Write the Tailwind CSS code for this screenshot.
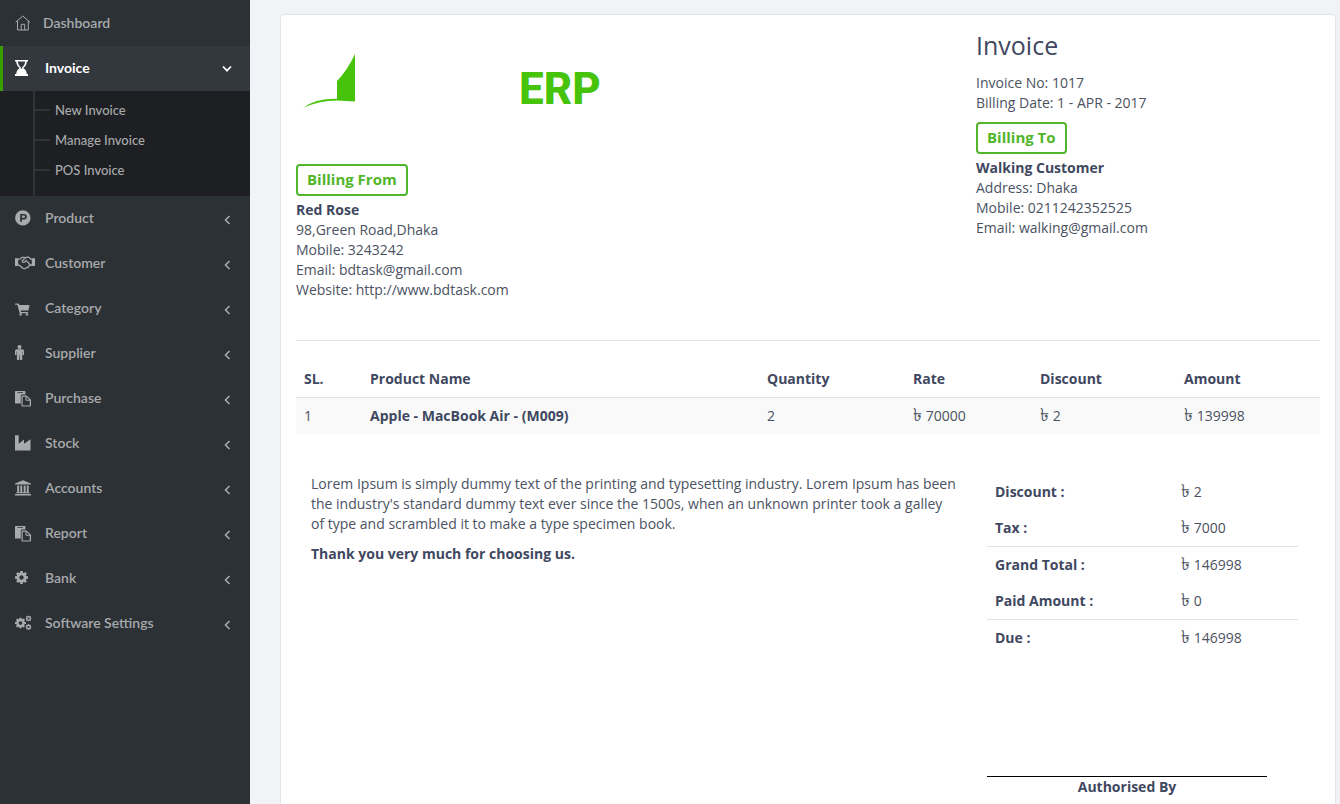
<!DOCTYPE html>
<html lang="en">
<head>
<meta charset="utf-8">
<title>Invoice</title>
<script src="https://cdn.jsdelivr.net/npm/@tailwindcss/browser@4"></script>
</head>
<body class="flex h-screen overflow-hidden bg-[#f1f3f6] font-['Open_Sans',sans-serif] text-sm text-[#4b5262]">

<svg class="hidden">
  <symbol id="chev" viewBox="0 0 8 10"><path d="M6.500 1 2.500 5l4 4" fill="none" stroke="currentColor" stroke-width="1.600"/></symbol>
  <symbol id="paste" viewBox="0 0 16 16"><path fill="currentColor" fill-rule="evenodd" d="M.6 0h9.200q.6 0 .6.6V3.500H7q-1.200 0-1.200 1.200V12.500H.6Q0 12.500 0 11.900V.6Q0 0 .6 0zM2.500 1.200v.8h5.500v-.8zM7.300 4.500h4.200l4.500 4.300v6q0 .8-.8.8H7.300q-.8 0-.8-.8V5.300q0-.8.8-.8zM7.700 5.700v8.700h7V9.800h-3.400q-.8 0-.8-.8V5.700zM11.600 6v2.700h2.700z"/></symbol>
  <symbol id="cog" viewBox="128 128 1536 1536"><path fill="currentColor" d="M1152 896q0-106-75-181t-181-75-181 75-75 181 75 181 181 75 181-75 75-181zm512-109v222q0 12-8 23t-20 13l-185 28q-19 54-39 91 35 50 107 138 10 12 10 25t-9 23q-27 37-99 108t-94 71q-12 0-26-9l-138-108q-44 23-91 38-16 136-29 186-7 28-36 28h-222q-14 0-24.500-8.500t-11.500-21.500l-28-184q-49-16-90-37l-141 107q-10 9-25 9-14 0-25-11-126-114-165-168-7-10-7-23 0-12 8-23 15-21 51-66.500t54-70.500q-27-50-41-99l-183-27q-13-2-21-12.500t-8-23.500v-222q0-12 8-23t19-13l186-28q14-46 39-92-40-57-107-138-10-12-10-24 0-10 9-23 26-36 98.500-107.500t94.500-71.500q13 0 26 10l138 107q44-23 91-38 16-136 29-186 7-28 36-28h222q14 0 24.500 8.500t11.500 21.500l28 184q49 16 90 37l142-107q9-9 24-9 13 0 25 10 129 119 165 170 7 8 7 22 0 12-8 23-15 21-51 66.500t-54 70.500q26 50 41 98l183 28q13 2 21 12.500t8 23.500z"/></symbol>
</svg>

<nav class="h-full w-[250px] shrink-0 overflow-hidden bg-[#2c3136] pt-px font-['Lato',sans-serif] text-sm font-semibold text-[#a8aaac]" aria-label="Main">
  <a href="#" class="flex h-[45px] items-center pr-[19px] pb-0.5 pl-[15px]">
    <svg class="h-4 w-4" viewBox="0 0 16 16" fill="none" stroke="currentColor"><path d="M.6 7.300 7.800 1 15 7.300M2.500 6v9h10.800V6M6.200 15V9.300h3.500V15"/></svg>
    <span class="ml-3">Dashboard</span>
  </a>
  <a href="#" aria-current="page" class="flex h-[45px] items-center border-l-3 border-[#37a000] bg-[#33373e] pr-[18px] pb-0.5 pl-3 text-white">
    <svg class="h-4 w-[22px]" viewBox="0 0 22 16"><path fill="currentColor" fill-rule="evenodd" d="M0 0h13v1.500h-1.200q-.2 4-3.500 6.500 3.300 2 3.500 6H13v2H0v-2h1.200q.2-4 3.500-6Q1.400 5.500 1.200 1.500H0zM2.700 1.500q.3 3.500 3.300 6L5.500 8.600h2L7 7.500q3-2.500 3.300-6z"/></svg>
    <span class="ml-2 flex-1 font-bold">Invoice</span>
    <svg class="mt-0.5 h-2 w-[10px]" viewBox="0 0 10 8"><path d="M1 1.500 5 5.700 9 1.500" fill="none" stroke="currentColor" stroke-width="1.700"/></svg>
  </a>
  <div class="bg-[#1d1f22] pl-[33px] text-[13px] font-medium">
    <ul class="border-l-2 border-[#2f3437] pt-1 pb-[11px]">
      <li class="flex h-[30px] items-center gap-[5px]"><span class="h-0.5 w-[15px] bg-[#2f3437]"></span><a href="#">New Invoice</a></li>
      <li class="flex h-[30px] items-center gap-[5px]"><span class="h-0.5 w-[15px] bg-[#2f3437]"></span><a href="#">Manage Invoice</a></li>
      <li class="flex h-[30px] items-center gap-[5px]"><span class="h-0.5 w-[15px] bg-[#2f3437]"></span><a href="#">POS Invoice</a></li>
    </ul>
  </div>
  <a href="#" class="flex h-[45px] items-center pr-[19px] pb-0.5 pl-[15px]">
    <svg class="h-4 w-[22px]" viewBox="0 0 22 16"><path fill="currentColor" fill-rule="evenodd" d="M7.800.2a7.700 7.700 0 1 1 0 15.400 7.700 7.700 0 0 1 0-15.400zM5.200 4v7.800h1.700V9.400h2.200a2.700 2.700 0 0 0 0-5.400zM6.900 5.600h2.100a1.100 1.100 0 0 1 0 2.200H6.900z"/></svg>
    <span class="ml-2 flex-1">Product</span><svg class="mt-1 h-[10px] w-2"><use href="#chev"/></svg>
  </a>
  <a href="#" class="flex h-[45px] items-center pr-[19px] pb-0.5 pl-[15px]">
    <svg class="h-4 w-[22px]" viewBox="0 0 22 16"><path fill="currentColor" d="M0 3.200h3.200V11H0zM16.800 3.200H20V11h-3.200z"/><path fill="none" stroke="currentColor" stroke-width="1.300" d="M3 4.200h1.600L7 2.300h2.300L10.500 3l1.200-.8h2l2.300 2h1M3 10.200h1.200l4 3.300q1 .7 2 0l1.500-.8 1.500-.6 1-1.300L15.500 10H17M10.500 3 7.200 5.800q.4 2.300 2.600 1.100L11.300 5.600l4 4.400"/></svg>
    <span class="ml-2 flex-1">Customer</span><svg class="mt-1 h-[10px] w-2"><use href="#chev"/></svg>
  </a>
  <a href="#" class="flex h-[45px] items-center pr-[19px] pb-0.5 pl-[15px]">
    <svg class="mt-0.5 h-4 w-[22px]" viewBox="0 0 22 16"><path fill="currentColor" d="M.7 2.500h2.600q.6 0 .8.600l.3.900H14q.7 0 .5.700l-1 4.300q-.1.600-.7.600H5.700l.4 1.300h6.800v1.300H5.200q-.5 0-.7-.5L2.400 3.800H.7q-.7 0-.7-.6t.7-.7zM4.500 12.500h2.300v2H4.500zM10.800 12.500h2.300v2h-2.300z"/></svg>
    <span class="ml-2 flex-1">Category</span><svg class="mt-1 h-[10px] w-2"><use href="#chev"/></svg>
  </a>
  <a href="#" class="flex h-[45px] items-center pr-[19px] pb-0.5 pl-[15px]">
    <svg class="h-4 w-[22px]" viewBox="0 0 22 16"><path fill="currentColor" d="M4.500 0a2 2 0 1 1 0 4 2 2 0 0 1 0-4zM1.700 4.200h5.600Q9 4.200 9 6v3.500q0 .8-.7.800t-.7-.8V6.500h-.3V14.200q0 .9-1.200.9t-1.200-.9V10.300h-.6v3.900q0 .9-1.200.9t-1.200-.9V6.500h-.4v3q0 .8-.7.8T0 9.500V6q0-1.800 1.700-1.800z"/></svg>
    <span class="ml-2 flex-1">Supplier</span><svg class="mt-1 h-[10px] w-2"><use href="#chev"/></svg>
  </a>
  <a href="#" class="flex h-[45px] items-center pr-[19px] pb-0.5 pl-[15px]">
    <svg class="mt-0.5 mr-1.5 h-4 w-4"><use href="#paste"/></svg>
    <span class="ml-2 flex-1">Purchase</span><svg class="mt-1 h-[10px] w-2"><use href="#chev"/></svg>
  </a>
  <a href="#" class="flex h-[45px] items-center pr-[19px] pb-0.5 pl-[15px]">
    <svg class="h-4 w-[22px]" viewBox="0 0 22 16"><path fill="currentColor" d="M0 .3h3.700v8.500L9 4.500v4.300l6.500-4.600v11.300H0z"/></svg>
    <span class="ml-2 flex-1">Stock</span><svg class="mt-1 h-[10px] w-2"><use href="#chev"/></svg>
  </a>
  <a href="#" class="flex h-[45px] items-center pr-[19px] pb-0.5 pl-[15px]">
    <svg class="h-4 w-[22px]" viewBox="0 0 22 16"><path fill="currentColor" d="M8 .2 16 3.400v1.200H0V3.400zM2.200 5.400h1.900v6.800h1.200V5.400h1.900v6.800h1.500V5.400h1.900v6.800h1.200V5.400h1.900v6.800h.9v1H1.300v-1h.9zM0 13.900h16v1.500H0z"/></svg>
    <span class="ml-2 flex-1">Accounts</span><svg class="mt-1 h-[10px] w-2"><use href="#chev"/></svg>
  </a>
  <a href="#" class="flex h-[45px] items-center pr-[19px] pb-0.5 pl-[15px]">
    <svg class="mt-0.5 mr-1.5 h-4 w-4"><use href="#paste"/></svg>
    <span class="ml-2 flex-1">Report</span><svg class="mt-1 h-[10px] w-2"><use href="#chev"/></svg>
  </a>
  <a href="#" class="flex h-[45px] items-center pr-[19px] pb-0.5 pl-[15px]">
    <svg class="mr-[9px] h-[13px] w-[13px]"><use href="#cog"/></svg>
    <span class="ml-2 flex-1">Bank</span><svg class="mt-1 h-[10px] w-2"><use href="#chev"/></svg>
  </a>
  <a href="#" class="flex h-[45px] items-center pr-[19px] pb-0.5 pl-[15px]">
    <svg class="h-4 w-[22px]" viewBox="0 0 22 16"><use href="#cog" x="0" y="2.500" width="11" height="11"/><use href="#cog" x="10.500" y=".5" width="6" height="6"/><use href="#cog" x="10.500" y="9" width="6" height="6"/></svg>
    <span class="ml-2 flex-1">Software Settings</span><svg class="mt-1 h-[10px] w-2"><use href="#chev"/></svg>
  </a>
</nav>

<main class="h-full min-w-0 flex-1 overflow-y-auto pt-[14px] pr-1 pb-8 pl-[30px] [scrollbar-width:none]">
  <section class="rounded border border-[#e1e4e8] bg-white px-[15px] pb-20">
    <div class="flex">
      <div class="flex-1">
        <svg class="mt-[15px] h-[134px] w-[320px]" viewBox="0 0 320 134" role="img" aria-label="ERP logo">
          <path fill="#46c30a" d="M59 24V71.500L41 70.600Q22 71 7 78 19 68.500 41 68.800V51Q51 41 59 24z"/>
          <text x="223" y="74" font-family="Roboto, sans-serif" font-weight="800" font-size="44" fill="#46c30a">ERP</text>
        </svg>
        <div class="inline-block rounded border-2 border-[#52b52a] px-[9px] pb-0.5 text-[15px] leading-[26px] font-bold text-[#52b52a]">Billing From</div>
        <address class="mt-1 leading-5 not-italic">
          <strong class="font-bold text-[#3f4860]">Red Rose</strong><br>98,Green Road,Dhaka<br>Mobile: 3243242<br>Email: bdtask@gmail.com<br>Website: http://www.bdtask.com
        </address>
      </div>
      <div class="w-[344px] shrink-0 pt-3">
        <h1 class="text-[25px] leading-9 text-[#3f4860]">Invoice</h1>
        <p class="mt-[10px] leading-5">Invoice No: 1017<br>Billing Date: 1 - APR - 2017</p>
        <div class="mt-[9px] inline-block rounded border-2 border-[#52b52a] px-[9px] pb-0.5 text-[15px] leading-[26px] font-bold text-[#52b52a]">Billing To</div>
        <address class="mt-1 leading-5 not-italic">
          <strong class="font-bold text-[#3f4860]">Walking Customer</strong><br>Address: Dhaka<br>Mobile: 0211242352525<br>Email: walking@gmail.com
        </address>
      </div>
    </div>

    <hr class="mt-10 mb-5 border-[#e1e3e5]">

    <table class="w-full table-fixed text-left leading-5">
      <colgroup><col class="w-[66px]"><col><col class="w-[146px]"><col class="w-[127px]"><col class="w-[144px]"><col class="w-[144px]"></colgroup>
      <thead>
        <tr class="text-[#3f4860]"><th class="p-2 font-bold">SL.</th><th class="p-2 font-bold">Product Name</th><th class="p-2 font-bold">Quantity</th><th class="p-2 font-bold">Rate</th><th class="p-2 font-bold">Discount</th><th class="p-2 font-bold">Amount</th></tr>
      </thead>
      <tbody>
        <tr class="border-t border-[#e1e3e5] bg-[#f9f9f9]"><td class="p-2">1</td><td class="p-2 font-bold text-[#3f4860]">Apple - MacBook Air - (M009)</td><td class="p-2">2</td><td class="p-2"><span class="text-lg leading-[10px]">৳</span> 70000</td><td class="p-2"><span class="text-lg leading-[10px]">৳</span> 2</td><td class="p-2"><span class="text-lg leading-[10px]">৳</span> 139998</td></tr>
      </tbody>
    </table>

    <div class="mt-10 flex">
      <div class="flex-1 pr-[30px] pl-[15px] leading-5">
        <p>Lorem Ipsum is simply dummy text of the printing and typesetting industry. Lorem Ipsum has been the industry's standard dummy text ever since the 1500s, when an unknown printer took a galley of type and scrambled it to make a type specimen book.</p>
        <p class="mt-[10px] font-bold text-[#3f4860]">Thank you very much for choosing us.</p>
      </div>
      <div class="w-[333px] shrink-0 pr-[22px]">
        <table class="w-full table-fixed text-left leading-5">
          <tbody>
            <tr><th class="w-[186px] p-2 font-bold text-[#3f4860]">Discount :</th><td class="p-2"><span class="text-lg leading-[10px]">৳</span> 2</td></tr>
            <tr><th class="p-2 font-bold text-[#3f4860]">Tax :</th><td class="p-2"><span class="text-lg leading-[10px]">৳</span> 7000</td></tr>
            <tr class="border-t border-[#e1e3e5]"><th class="p-2 font-bold text-[#3f4860]">Grand Total :</th><td class="p-2"><span class="text-lg leading-[10px]">৳</span> 146998</td></tr>
            <tr><th class="p-2 font-bold text-[#3f4860]">Paid Amount :</th><td class="p-2"><span class="text-lg leading-[10px]">৳</span> 0</td></tr>
            <tr class="border-t border-[#e1e3e5]"><th class="p-2 font-bold text-[#3f4860]">Due :</th><td class="p-2"><span class="text-lg leading-[10px]">৳</span> 146998</td></tr>
          </tbody>
        </table>
        <p class="mt-[120px] w-[280px] border-t border-black text-center leading-5 font-bold text-[#3f4860]">Authorised By</p>
      </div>
    </div>
  </section>
</main>
</body>
</html>
